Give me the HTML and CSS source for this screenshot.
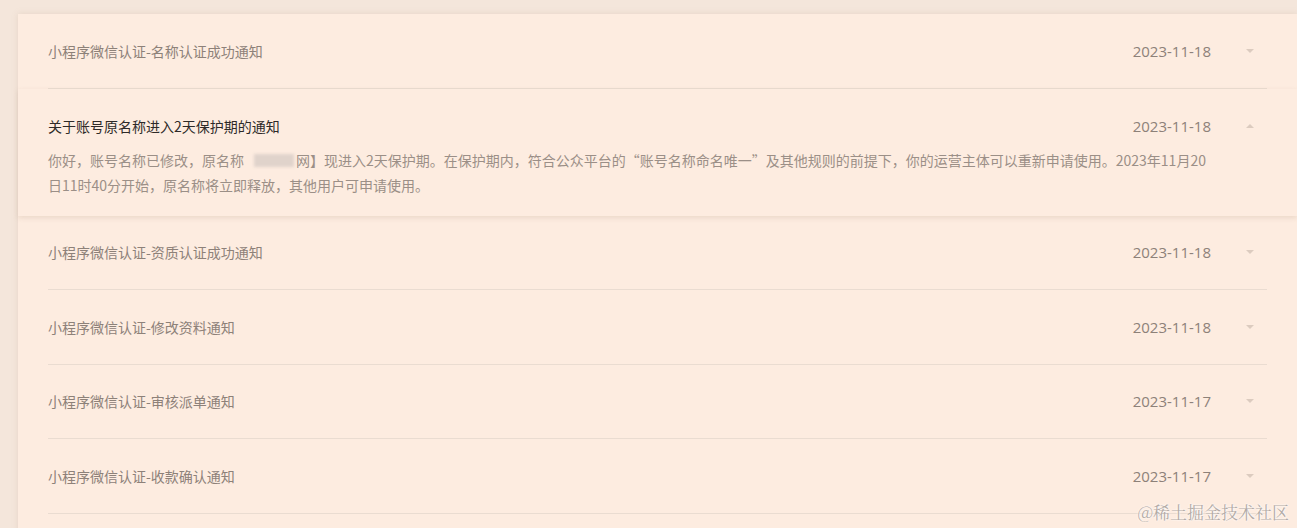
FILE: index.html
```html
<!doctype html>
<html>
<head>
    <meta charset="utf-8" />
    <title>通知</title>
    <link rel="stylesheet" href="styles.css">
</head>
<body>
    <div class="page">
        <div class="card">
            <div class="item">
                <div class="item-head">
                    <span class="item-title">小程序微信认证-名称认证成功通知</span>
                    <span class="item-date">2023-11-18</span>
                    <span class="arrow down"></span>
                </div>
            </div>
            <div class="item open">
                <div class="item-head">
                    <span class="item-title">关于账号原名称进入2天保护期的通知</span>
                    <span class="item-date">2023-11-18</span>
                    <span class="arrow up"></span>
                </div>
                <div class="item-body">
                    你好，账号名称已修改，原名称<span class="blur"></span>网】现进入2天保护期。在保护期内，符合公众平台的“账号名称命名唯一”及其他规则的前提下，你的运营主体可以重新申请使用。2023年11月20日11时40分开始，原名称将立即释放，其他用户可申请使用。
                </div>
            </div>
            <div class="item">
                <div class="item-head">
                    <span class="item-title">小程序微信认证-资质认证成功通知</span>
                    <span class="item-date">2023-11-18</span>
                    <span class="arrow down"></span>
                </div>
            </div>
            <div class="item">
                <div class="item-head">
                    <span class="item-title">小程序微信认证-修改资料通知</span>
                    <span class="item-date">2023-11-18</span>
                    <span class="arrow down"></span>
                </div>
            </div>
            <div class="item">
                <div class="item-head">
                    <span class="item-title">小程序微信认证-审核派单通知</span>
                    <span class="item-date">2023-11-17</span>
                    <span class="arrow down"></span>
                </div>
            </div>
            <div class="item">
                <div class="item-head">
                    <span class="item-title">小程序微信认证-收款确认通知</span>
                    <span class="item-date">2023-11-17</span>
                    <span class="arrow down"></span>
                </div>
            </div>
        </div>
    </div>
    <div class="watermark">@稀土掘金技术社区</div>
</body>
</html>
```

FILE: styles.css
```css
:root {
    --bg: #f4e6db;
    --card: #fdece0;
    --line: #eadcd1;
    --muted: #8d8179;
    --body: #9b8f87;
}
html, body {
    background-color: var(--bg);
}
body {
    margin: 0;
    height: 528px;
    overflow: hidden;
    font-family: 'Noto Sans CJK SC', 'Noto Sans', sans-serif;
    font-size: 14px;
    color: var(--muted);
}

.page {
    padding: 14px 0 0 18px;
}
.card {
    padding-bottom: 40px;
    background-color: var(--card);
    box-shadow: 0 0 6px rgba(190, 160, 135, 0.25);
}

.item {
    padding: 0 30px;
}
    .item-head {
        display: flex;
        align-items: center;
        height: 73.5px;
        border-bottom: 1px solid var(--line);
    }
        .item-title {
            flex: 1;
        }
        .item-date {
            color: var(--muted);
            font-family: 'Open Sans', 'Noto Sans', sans-serif;
            font-size: 15px;
        }
        .arrow {
            width: 0;
            height: 0;
            margin: 0 13px 0 35px;
            border-left: 4px solid transparent;
            border-right: 4px solid transparent;
        }
        .arrow.down {
            border-top: 4px solid #dccbbf;
        }
        .arrow.up {
            border-bottom: 4px solid #dccbbf;
        }

.item.open {
    position: relative;
    padding-bottom: 18px;
    box-shadow: 0 2px 5px rgba(175, 145, 120, 0.22);
}
    .item.open .item-head {
        height: 44px;
        padding-top: 15px;
        border-bottom: none;
    }
    .item.open .item-title {
        color: #2e2a28;
    }
    .item-body {
        line-height: 25px;
        color: var(--body);
        padding-right: 57px;
    }
        .blur {
            display: inline-block;
            width: 40px;
            height: 13px;
            margin: 0 2px 0 10px;
            vertical-align: -1px;
            background-color: #e0d3cb;
            filter: blur(1.5px);
        }

.watermark {
    position: absolute;
    right: 8px;
    bottom: 4px;
    font-family: 'Noto Serif CJK SC', 'Liberation Serif', serif;
    font-size: 17px;
    color: #b3aaa5;
    text-shadow: 0 0 2px #fff, 0 0 2px #fff;
}
```
